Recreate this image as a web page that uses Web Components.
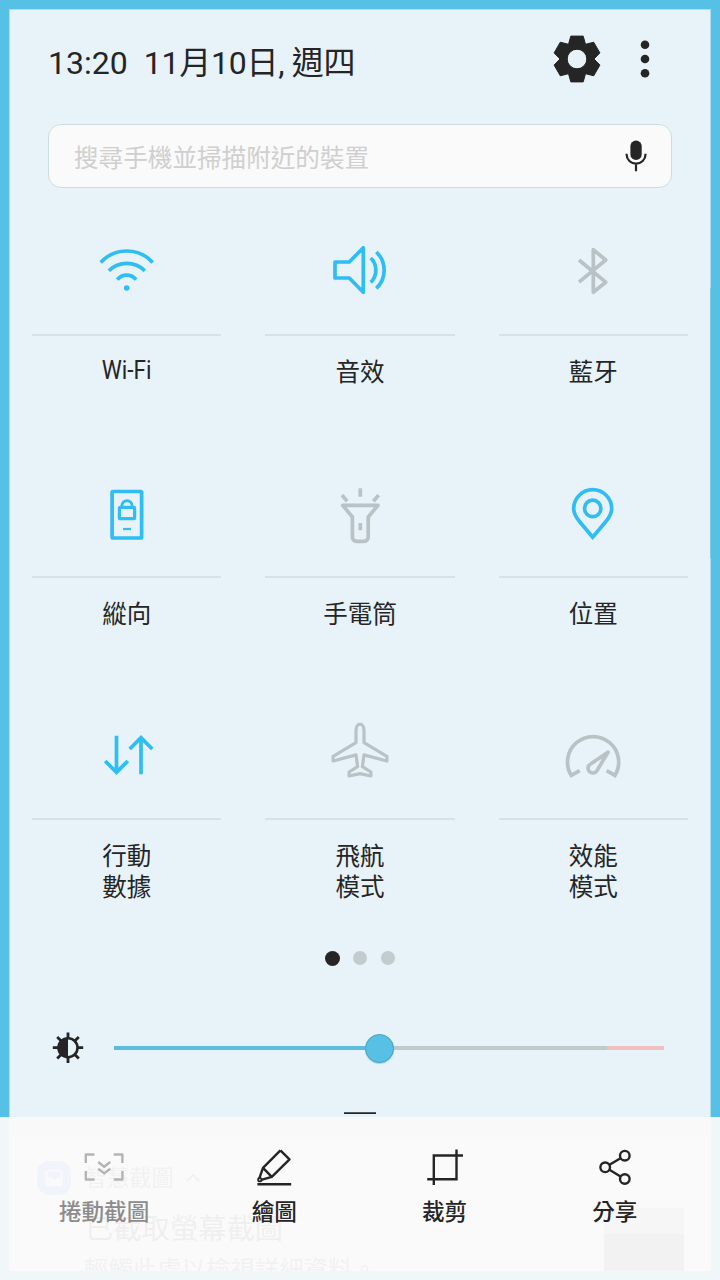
<!DOCTYPE html>
<html lang="zh-Hant">
<head>
<meta charset="utf-8">
<title>Quick settings</title>
<style>
    body {
        margin: 0;
        overflow: hidden;
        font-family: Roboto, "Noto Sans CJK TC", sans-serif;
        color: #252525;
    }
</style>
</head>
<body>
<quick-screen>
    <status-header time="13:20" date="11月10日, 週四"></status-header>
    <search-box>搜尋手機並掃描附近的裝置</search-box>
    <tile-grid>
        <quick-tile icon="wifi" on narrow>Wi-Fi</quick-tile>
        <quick-tile icon="sound" on>音效</quick-tile>
        <quick-tile icon="bluetooth">藍牙</quick-tile>
        <quick-tile icon="portrait" on>縱向</quick-tile>
        <quick-tile icon="torch">手電筒</quick-tile>
        <quick-tile icon="location" on>位置</quick-tile>
        <quick-tile icon="data" on>行動<br>數據</quick-tile>
        <quick-tile icon="plane">飛航<br>模式</quick-tile>
        <quick-tile icon="gauge">效能<br>模式</quick-tile>
    </tile-grid>
    <page-dots></page-dots>
    <brightness-slider></brightness-slider>
    <notification-card slot="below">
        <span slot="app">智慧截圖</span>
        <span slot="title">已截取螢幕截圖</span>
        <span slot="text">輕觸此處以檢視詳細資料。</span>
    </notification-card>
    <capture-bar slot="overlay">
        <capture-action icon="scroll" disabled>捲動截圖</capture-action>
        <capture-action icon="draw">繪圖</capture-action>
        <capture-action icon="crop">裁剪</capture-action>
        <capture-action icon="share">分享</capture-action>
    </capture-bar>
</quick-screen>

<script>
// Icon shapes, all drawn around the origin.
const icons = {
    wifi: `
        <path d="M-26.3 -7.5A35.1 35.1 0 0 1 25.7 -7.5M-18.2 .7A25.6 25.6 0 0 1 17.8 .7M-9.7 9.7A12 12 0 0 1 9.1 9.7"/>
        <circle class="fill" cx="-.3" cy="18" r="2.8"/>`,
    sound: `
        <path d="M-25 -8H-10.7L3.3 -22.3V22.3L-10.7 8H-25Z"/>
        <path d="M10.7 -12A16.9 16.9 0 0 1 10.7 12.3M16.3 -18A24.9 24.9 0 0 1 16.3 18.3"/>`,
    bluetooth: `<path d="M-14 -10L12.7 12.2L.3 22.2V-20.4L12.7 -10L-14 12.2"/>`,
    portrait: `
        <rect x="-14.9" y="-20.5" width="29.5" height="46.5" rx="1"/>
        <rect x="-7.6" y="-4.7" width="15.2" height="11.4" rx="1" stroke-width="3.2"/>
        <path d="M-5.2 -4.7V-5.9A5.2 5.4 0 0 1 5.2 -5.9V-4.7" stroke-width="3"/>
        <path d="M-4 17H4" stroke-width="2.2"/>`,
    torch: `
        <path d="M-17.3 -6.7H18L8.2 5V24.5Q8.2 29.3 3.8 29.3H-3.2Q-7.6 29.3 -7.6 24.5V5Z"/>
        <path d="M.3 -23.8V-15.3M-18 -16.9L-12.9 -10.8M18.6 -16.9L13.4 -10.8M.3 11V18.3"/>`,
    location: `
        <path stroke-linejoin="miter" d="M-.3 25.2L-13.5 9.5C-17.2 5 -19.3 1 -19.3 -3.3A19 19 0 0 1 18.7 -3.3C18.7 1 16.6 5 12.9 9.5Z"/>
        <circle cx="-.3" cy="-3.6" r="8.2"/>`,
    data: `<path stroke-linejoin="miter" d="M-10.5 -18.3V18M-21.8 7L-10.5 18.3L.8 7M14 20.3V-16M2.7 -5L14 -16.3L25.3 -5"/>`,
    plane: `<path stroke-width="3.2" d="M0 -29.8C-2.6 -29.8 -4 -26.5 -4 -23.5V-11.3L-26.9 2.3V7L-4 .9L-2.4 12.7L-10.9 18V22L0 19.6L10.9 22V18L2.4 12.7L4 .9L26.9 7V2.3L4 -11.3V-23.5C4 -26.5 2.6 -29.8 0 -29.8Z"/>`,
    gauge: `
        <path stroke-linejoin="miter" d="M-13.3 16.6L-21.8 21.4A25.6 25.6 0 1 1 22 21.4L13.6 16.6"/>
        <path d="M15 -1.8L-2.5 10A4.8 4.8 0 1 0 4 16.6Z"/>`,
    scroll: `<path d="M-18.2 -4V-12.5H-9.5M9.7 -12.5H18.4V-4M18.4 4V12.5H9.7M-9.5 12.5H-18.2V4"/>
        <path d="M-5.8 -5L.2 -.3L6.2 -5M-5.8 1.7L.2 6.4L6.2 1.7"/>`,
    draw: `
        <path d="M6.4 -16.6L15.5 -7.6L-2.2 9.8L-12.8 12.8M-14.6 11.2L-11 .9L6.4 -16.6M-11 .9L-2.2 9.8"/>
        <circle cx="-14.2" cy="12.7" r="1.7" stroke-width="1.8"/>
        <path d="M-16.6 17.3H17.2"/>`,
    crop: `<path stroke-linejoin="miter" d="M-11.2 18V-11.5H18M-17.8 12.2H11.5V-17.6"/>`,
    share: `
        <circle cx="-9.8" cy=".3" r="4.8"/><circle cx="9.8" cy="-11.3" r="4.8"/><circle cx="9.8" cy="12" r="4.8"/>
        <path d="M-5.5 -2.2L5.5 -8.8M-5.5 2.8L5.5 9.5"/>`
};

function attach(el, html) {
    const template = document.createElement('template');
    template.innerHTML = html;
    el.attachShadow({ mode: 'open' }).appendChild(template.content.cloneNode(true));
}

// Whole screen: blue edge, the panel, what lies below it and the overlay.
class QuickScreen extends HTMLElement {
    constructor() {
        super();
        attach(this, `
        <style>
            :host {
                display: block;
                position: relative;
                box-sizing: border-box;
                width: 720px;
                height: 1280px;
                padding: 9px;
                background: #57c0e5;
                overflow: hidden;
            }
            .panel {
                display: flex;
                flex-direction: column;
                box-sizing: border-box;
                height: 1108px;
                border: 1px solid #a8def0;
                border-bottom: 0;
                background: #e7f3f9;
            }
            .grip {
                width: 32px;
                height: 2px;
                margin: auto auto 3px;
                background: linear-gradient(#55595b 50%, #252525 50%);
            }
            .edge {
                position: absolute;
                right: 9px;
                top: 288px;
                width: 1px;
                height: 270px;
                background: #80cbe3;
            }
        </style>
        <div class="panel"><slot></slot><div class="grip"></div></div>
        <slot name="below"></slot>
        <div class="edge"></div>
        <slot name="overlay"></slot>`);
    }
}

class StatusHeader extends HTMLElement {
    constructor() {
        super();
        attach(this, `
        <style>
            :host {
                display: flex;
                align-items: center;
                height: 98px;
                padding: 0 51px 0 38px;
            }
            .clock {
                flex: 1;
                display: flex;
                gap: 16px;
                padding-top: 8px;
                font-size: 32px;
                line-height: 40px;
                white-space: pre;
            }
            #date { letter-spacing: -.25px; }
            svg { display: block; fill: #252525; }
            .gear { stroke: #252525; stroke-linejoin: round; }
            .more { margin-left: 28px; }
        </style>
        <div class="clock"><span id="time"></span><span id="date"></span></div>
        <svg class="gear" width="52" height="52" viewBox="-26 -26 52 52">
            <path fill-rule="evenodd" d="M-6.2 -22.9H6.2L8.5 -14.7L16.7 -16.8L22.9 -6.1L17 0L22.9 6.1L16.7 16.8L8.5 14.7L6.2 22.9H-6.2L-8.5 14.7L-16.7 16.8L-22.9 6.1L-17 0L-22.9 -6.1L-16.7 -16.8L-8.5 -14.7ZM9.8 0A9.8 9.8 0 1 0 -9.8 0A9.8 9.8 0 1 0 9.8 0Z"/>
        </svg>
        <svg class="more" width="28" height="52" viewBox="-14 -26 28 52">
            <circle cy="-14.3" r="4.3"/><circle r="4.3"/><circle cy="14.3" r="4.3"/>
        </svg>`);
    }
    connectedCallback() {
        this.shadowRoot.getElementById('time').textContent = this.getAttribute('time');
        this.shadowRoot.getElementById('date').textContent = this.getAttribute('date');
    }
}

class SearchBox extends HTMLElement {
    constructor() {
        super();
        attach(this, `
        <style>
            :host {
                display: flex;
                align-items: center;
                justify-content: space-between;
                box-sizing: border-box;
                height: 64px;
                margin: 16px 38px 0;
                padding: 0 19px 0 25px;
                border: 1px solid #cedde1;
                border-radius: 13px;
                background: #fafafa;
                color: #cfcfcf;
                font-size: 24.6px;
                line-height: 32px;
            }
            span { padding-top: 5px; }
        </style>
        <span><slot></slot></span>
        <svg width="32" height="36" viewBox="-16 -18 32 36" fill="none" stroke="#252525" stroke-width="2.2">
            <rect x="-5.6" y="-15.4" width="11.3" height="19.4" rx="5.6" fill="#252525" stroke="none"/>
            <path d="M-9.4 -2.3V-1.4A9.4 9 0 0 0 9.5 -1.4V-2.3M0 7.6V15.2"/>
        </svg>`);
    }
}

class TileGrid extends HTMLElement {
    constructor() {
        super();
        attach(this, `
        <style>
            :host {
                display: grid;
                grid-template-columns: repeat(3, 1fr);
                grid-auto-rows: 242px;
                margin-top: 26px;
            }
        </style>
        <slot></slot>`);
    }
}

class QuickTile extends HTMLElement {
    constructor() {
        super();
        attach(this, `
        <style>
            :host {
                display: flex;
                flex-direction: column;
                align-items: center;
                box-sizing: border-box;
                padding: 16px 22px 0;
                color: #252525;
                --tint: #b9c2c4;
            }
            :host([on]) { --tint: #2fbdf4; }
            svg {
                display: block;
                fill: none;
                stroke: var(--tint);
                stroke-width: 3.7;
                stroke-linejoin: round;
            }
            .fill { fill: var(--tint); stroke: none; }
            .line {
                align-self: stretch;
                height: 2px;
                margin-top: 24px;
                background: #d8e2e4;
            }
            .label {
                margin-top: 21px;
                font-size: 24.5px;
                line-height: 31px;
                text-align: center;
            }
            :host([narrow]) .label { margin-top: 19px; font-size: 26px; transform: scaleX(.87); }
        </style>
        <svg width="80" height="80" viewBox="-40 -40 80 80"></svg>
        <div class="line"></div>
        <div class="label"><slot></slot></div>`);
    }
    connectedCallback() {
        this.shadowRoot.querySelector('svg').innerHTML = icons[this.getAttribute('icon')];
    }
}

class PageDots extends HTMLElement {
    constructor() {
        super();
        attach(this, `
        <style>
            :host {
                display: flex;
                justify-content: center;
                align-items: center;
                gap: 14px;
                height: 16px;
                margin-top: 10px;
            }
            i { width: 14px; height: 14px; border-radius: 50%; background: #c2cccf; }
            i:first-of-type { width: 15px; height: 15px; margin: 0 -1px 0 0; background: #252525; }
        </style>
        <i></i><i></i><i></i>`);
    }
}

class BrightnessSlider extends HTMLElement {
    constructor() {
        super();
        attach(this, `
        <style>
            :host {
                display: flex;
                align-items: center;
                height: 32px;
                margin-top: 66px;
                padding: 0 46px 0 42px;
            }
            .track {
                flex: 1;
                display: flex;
                align-items: center;
                height: 4px;
                margin-left: 30px;
            }
            .done { width: 251px; height: 4px; background: #5dbbdb; }
            .rest { flex: 1; height: 4px; background: #bfcacd; }
            .hot { width: 57px; height: 4px; background: #f1bfbe; }
            .thumb {
                box-sizing: border-box;
                width: 29px;
                height: 29px;
                border: 1px solid #4b9fbe;
                border-radius: 50%;
                background: #57c0e5;
                box-shadow: 0 1px 1px #a5d3e3;
            }
        </style>
        <svg width="32" height="32" viewBox="-16 -15.7 32 32" fill="none" stroke="#252525" stroke-width="2.8">
            <circle r="9.5" stroke-width="2.6"/>
            <path d="M0 -10A10 10 0 0 0 0 10Z" fill="#252525" stroke="none"/>
            <path d="M0 -15.2V-10M0 10V15.2M-15.2 0H-10M10 0H15.2M-10.8 -10.8L-7 -7M10.8 -10.8L7 -7M-10.8 10.8L-7 7M10.8 10.8L7 7"/>
        </svg>
        <div class="track">
            <div class="done"></div><div class="thumb"></div><div class="rest"></div><div class="hot"></div>
        </div>`);
    }
}

// Screenshot notification, seen faintly through the capture bar.
class NotificationCard extends HTMLElement {
    constructor() {
        super();
        attach(this, `
        <style>
            :host {
                display: block;
                box-sizing: border-box;
                height: 154px;
                padding-top: 19px;
                background: #e4e4e4;
            }
            .card {
                display: flex;
                justify-content: space-between;
                box-sizing: border-box;
                height: 135px;
                padding: 25px 27px 0 28px;
                background: #fcfcfc;
                overflow: hidden;
            }
            .head { display: flex; align-items: center; height: 34px; color: #505050; font-size: 22.2px; line-height: 30px; }
            .app { width: 34px; height: 34px; margin-right: 14px; border-radius: 12px; background: #5b8fff; }
            .head svg { display: block; }
            .arrow { margin-left: 11px; }
            .title { margin: 14px 0 0 48px; font-size: 28.3px; line-height: 42px; color: #252525; }
            .text { margin: 1px 0 0 47px; font-size: 24.4px; line-height: 36px; color: #505050; white-space: nowrap; }
            .thumb { width: 80px; height: 63px; margin-top: 47px; background: linear-gradient(#b4b4b4 26px, #666 26px); }
        </style>
        <div class="card">
            <div>
                <div class="head">
                    <svg class="app" width="34" height="34" viewBox="0 0 34 34" fill="none" stroke="#fff" stroke-width="1.6">
                        <rect x="9.5" y="9.5" width="15" height="15" rx="1"/>
                        <path d="M10 20L14 17L17.5 20L21 17L24 20V24H10Z" fill="#fff"/>
                    </svg>
                    <slot name="app"></slot>
                    <svg class="arrow" width="16" height="12" fill="none" stroke="#505050" stroke-width="2"><path d="M2 9L8 3L14 9"/></svg>
                </div>
                <div class="title"><slot name="title"></slot></div>
                <div class="text"><slot name="text"></slot></div>
            </div>
            <div class="thumb"></div>
        </div>`);
    }
}

// Translucent bar over the bottom of the screen.
class CaptureBar extends HTMLElement {
    constructor() {
        super();
        attach(this, `
        <style>
            :host {
                position: absolute;
                left: 0;
                right: 0;
                bottom: 0;
                display: flex;
                box-sizing: border-box;
                height: 163px;
                padding: 30px 20px 0 19px;
                background: rgba(250, 250, 250, .95);
            }
        </style>
        <slot></slot>`);
    }
}

class CaptureAction extends HTMLElement {
    constructor() {
        super();
        attach(this, `
        <style>
            :host {
                flex: 1;
                display: flex;
                flex-direction: column;
                align-items: center;
                gap: 10px;
                color: #252525;
                font-size: 22.6px;
                font-weight: 500;
                line-height: 32px;
            }
            :host([disabled]) { color: #8c8c8c; --tint: #b4b4b4; }
            svg {
                display: block;
                fill: none;
                stroke: var(--tint, #252525);
                stroke-width: 2.4;
                stroke-linejoin: round;
            }
        </style>
        <svg width="40" height="40" viewBox="-20 -20 40 40"></svg>
        <span><slot></slot></span>`);
    }
    connectedCallback() {
        this.shadowRoot.querySelector('svg').innerHTML = icons[this.getAttribute('icon')];
    }
}

customElements.define('quick-screen', QuickScreen);
customElements.define('status-header', StatusHeader);
customElements.define('search-box', SearchBox);
customElements.define('tile-grid', TileGrid);
customElements.define('quick-tile', QuickTile);
customElements.define('page-dots', PageDots);
customElements.define('brightness-slider', BrightnessSlider);
customElements.define('notification-card', NotificationCard);
customElements.define('capture-bar', CaptureBar);
customElements.define('capture-action', CaptureAction);
</script>
</body>
</html>
